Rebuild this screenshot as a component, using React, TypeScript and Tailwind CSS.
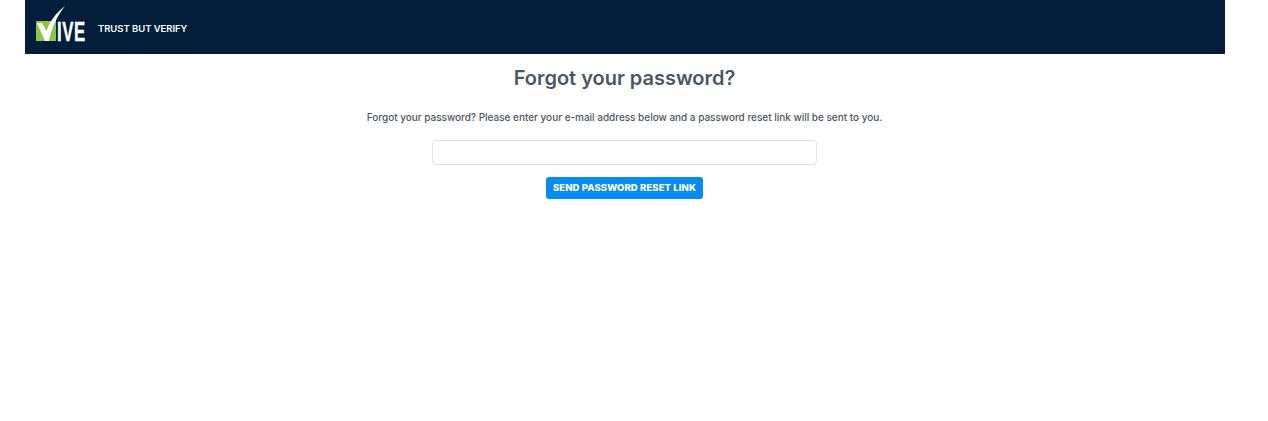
export default function App() {
  return (
    <div className="min-h-[421px] w-[1250px] bg-white px-[25px] font-['Inter',sans-serif]">
      {/* Header */}
      <header className="flex h-[54px] items-center bg-[#031e3a] pl-[10px]">
        <svg width="52" height="38" viewBox="0 0 52 38" className="mt-[-8px] shrink-0 overflow-visible">
          <rect x="1" y="17" width="20" height="20" fill="#8dc63f" />
          <path d="M2 19 L7 19 L11.5 27 C15 17 21 9 30 2 C23 11 17 22 14 37 L10 37 Z" fill="#fff" />
          <text
            transform="translate(22 37) scale(0.6 1)"
            letterSpacing="1"
            fill="#fff"
            stroke="#fff"
            strokeWidth="0.4"
            fontFamily="Liberation Sans"
            fontWeight="700"
            fontSize="28"
          >
            IVE
          </text>
        </svg>
        <span className="ml-[11px] mt-[4px] text-[9.5px] font-semibold tracking-[-0.05px] text-white">TRUST BUT VERIFY</span>
      </header>

      {/* Form */}
      <main className="mr-[1px] flex flex-col items-center">
        <h1 className="mt-[11px] text-[20px] leading-[26px] font-semibold tracking-[-0.02px] text-[#4b5763]">Forgot your password?</h1>
        <p className="mt-[19px] text-[10px] leading-[14px] font-medium tracking-[-0.02px] text-[#4b5763]">
          Forgot your password? Please enter your e-mail address below and a password reset link will be sent to you.
        </p>
        <input
          type="email"
          className="mt-[16px] h-[25px] w-[385px] rounded-[4px] border border-[#dfe0e8] bg-white"
        />
        <button className="mt-[12px] h-[22px] w-[157px] rounded-[3px] bg-[#068bef] text-[9.5px] font-extrabold tracking-[0.1px] text-white">
          SEND PASSWORD RESET LINK
        </button>
      </main>
    </div>
  );
}
